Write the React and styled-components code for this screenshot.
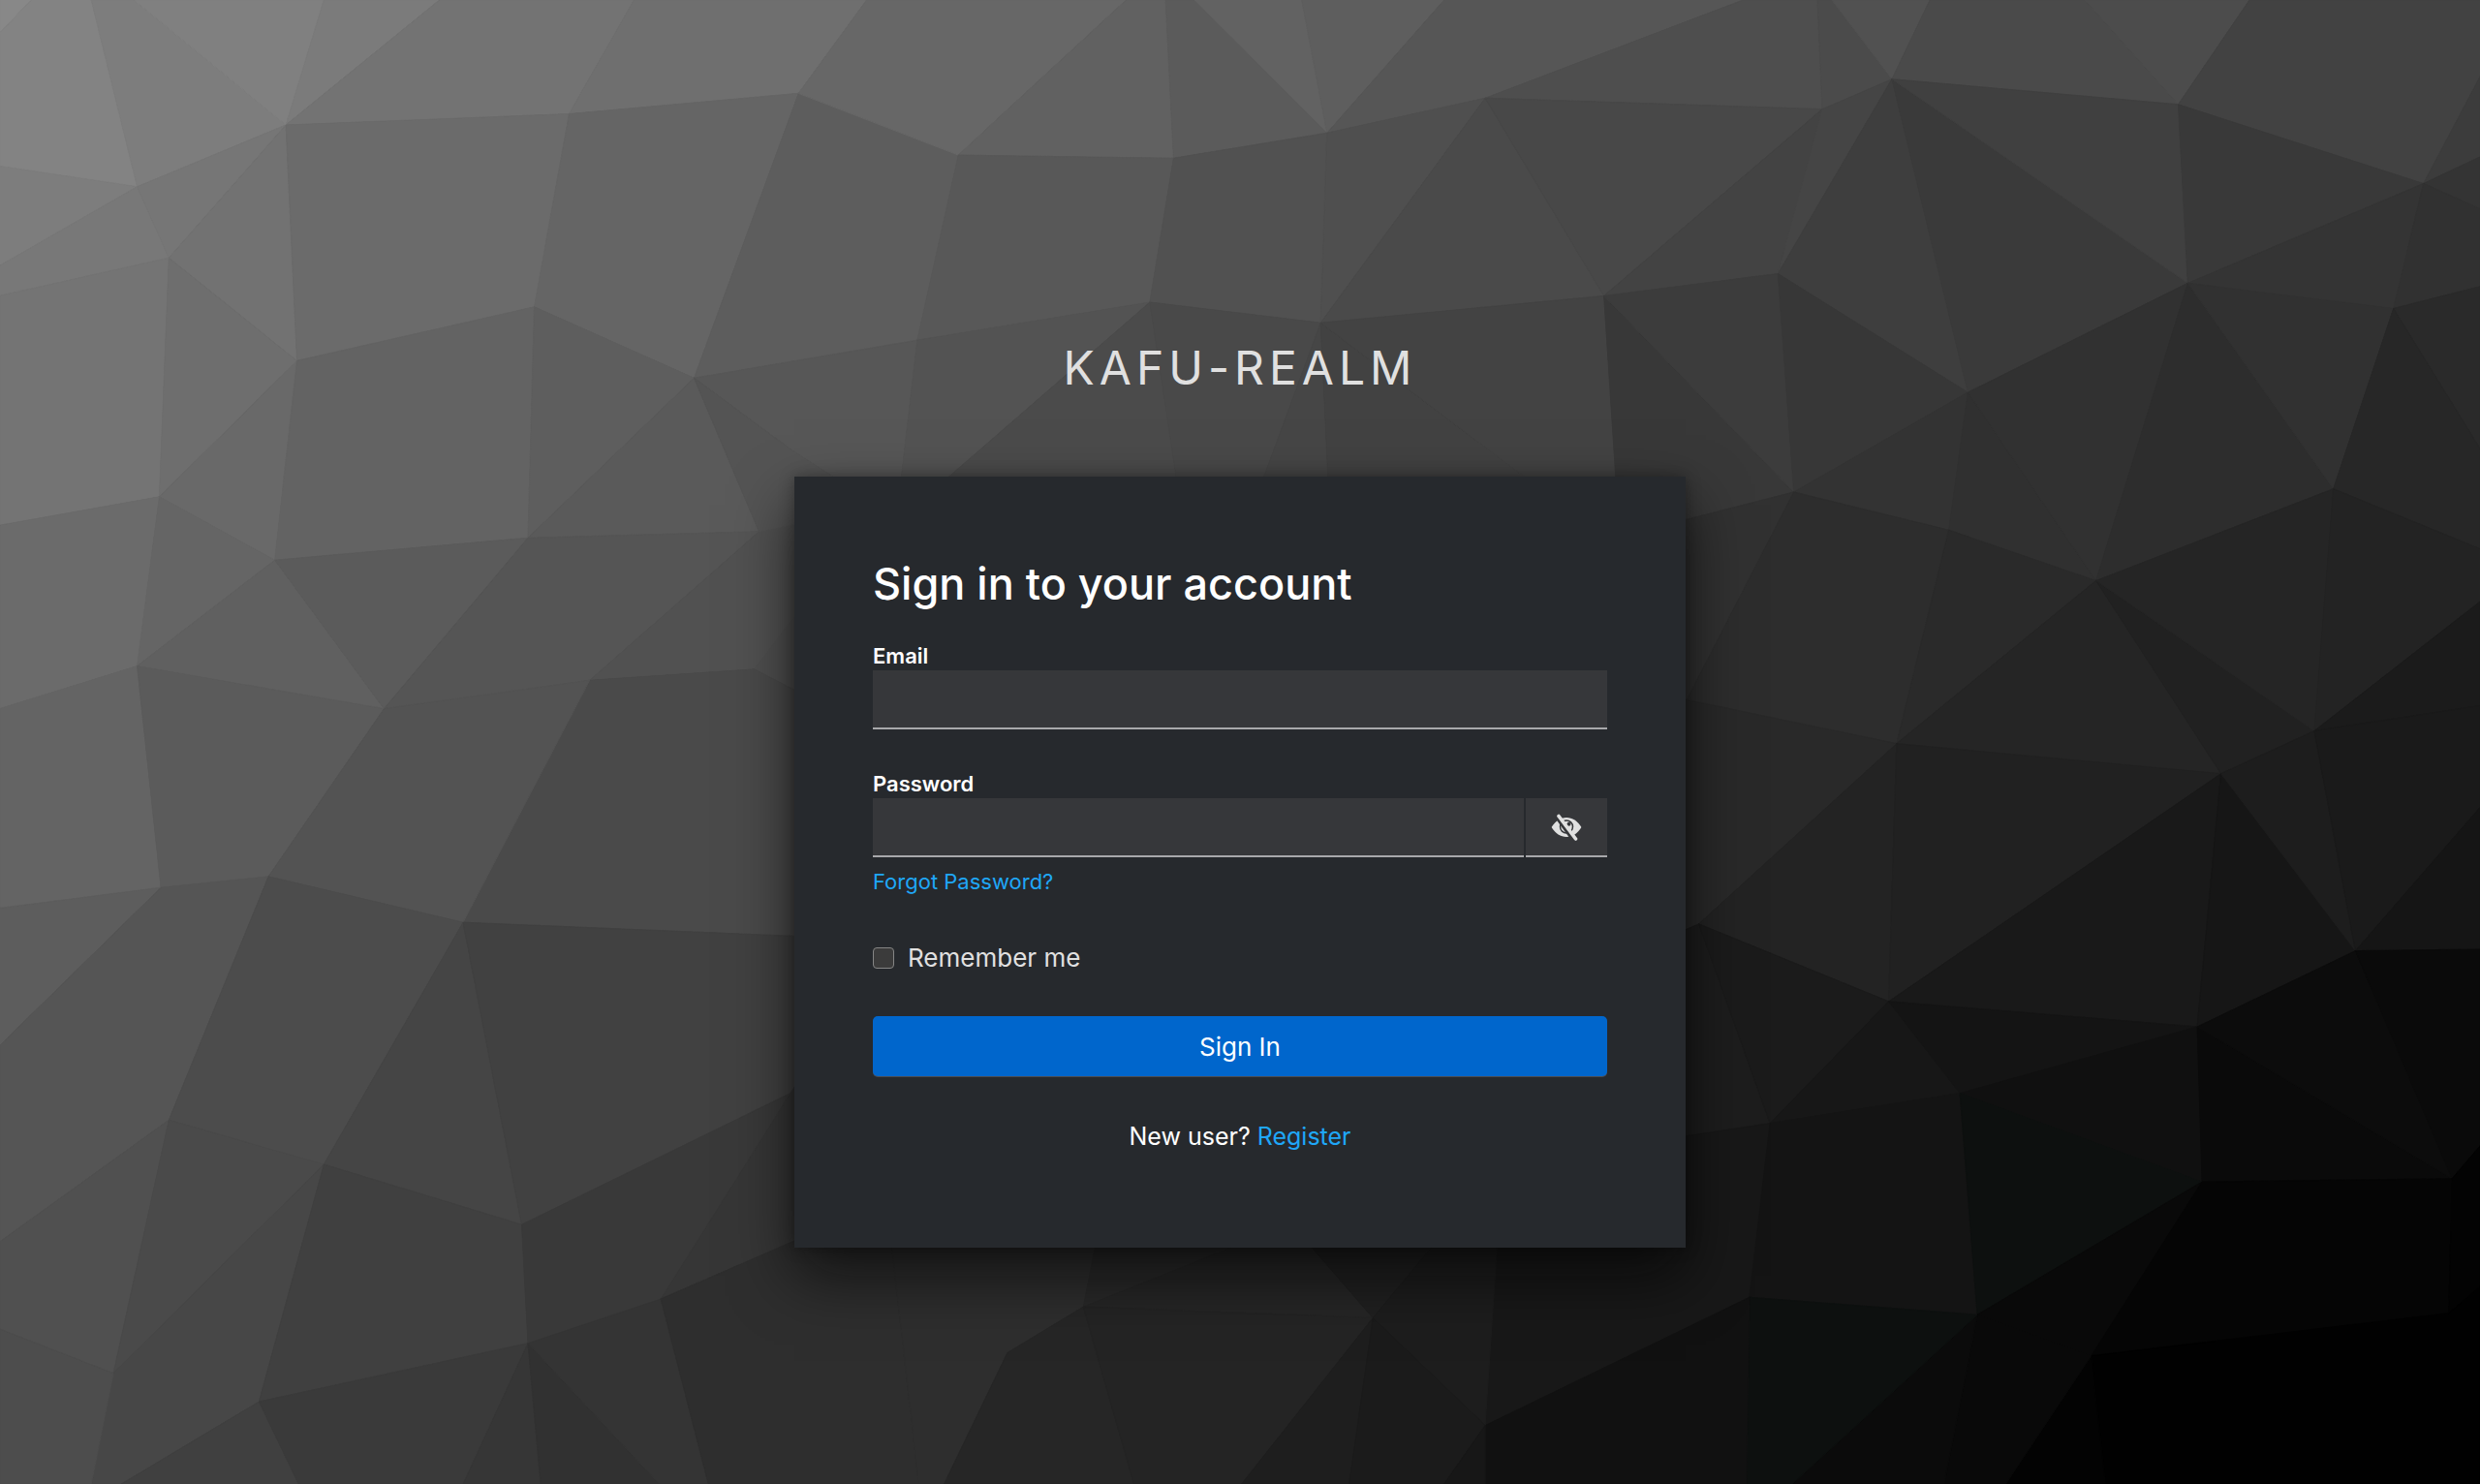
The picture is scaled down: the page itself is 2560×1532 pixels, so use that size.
import React, { useState } from "react";
import styled, { createGlobalStyle } from "styled-components";

const GlobalStyle = createGlobalStyle`
  *, *::before, *::after { box-sizing: border-box; }
  body {
    margin: 0;
    background: #1b1b1b;
    color: #e0e0e0;
    font-family: Inter, "Liberation Sans", sans-serif;
  }
`;

/* Low-poly backdrop: [grey level or colour, polygon points] */
const FACETS = [
  ["#888888", "0,0 20,0 0,21"],
  ["#838383", "20,0 58,0 87,118 0,105 0,21"],
  ["#7d7d7d", "58,0 85,0 181,79 87,118"],
  ["#808080", "85,0 205,0 181,79"],
  ["#7b7b7b", "205,0 278,0 181,79"],
  ["#737373", "278,0 401,0 360,72 181,79"],
  ["#6f6f6f", "401,0 548,0 505,59 360,72"],
  ["#7d7d7d", "0,105 87,118 0,168"],
  ["#787878", "0,168 87,118 107,163 0,187"],
  ["#767676", "87,118 181,79 107,163"],
  ["#727272", "181,79 188,228 107,163"],
  ["#6b6b6b", "181,79 360,72 338,194 188,228"],
  ["#656565", "360,72 505,59 439,239 338,194"],
  ["#5d5d5d", "505,59 606,98 580,215 439,239"],
  ["#747474", "0,187 107,163 101,314 0,332"],
  ["#6e6e6e", "107,163 188,228 101,314"],
  ["#696969", "188,228 174,354 101,314"],
  ["#636363", "188,228 338,194 334,340 174,354"],
  ["#5e5e5e", "338,194 439,239 334,340"],
  ["#5a5a5a", "439,239 480,336 334,340"],
  ["#6b6b6b", "0,332 101,314 87,421 0,448"],
  ["#656565", "101,314 174,354 87,421"],
  ["#606060", "174,354 243,448 87,421"],
  ["#5b5b5b", "174,354 334,340 243,448"],
  ["#555555", "334,340 480,336 373,430 243,448"],
  ["#515151", "480,336 510,330 510,400 477,423 373,430"],
  ["#4f4f4f", "477,423 510,380 510,440"],
  ["#4a4a4a", "373,430 477,423 510,440 510,592 293,583"],
  ["#646464", "0,448 87,421 102,561 0,574"],
  ["#5b5b5b", "87,421 243,448 170,554 102,561"],
  ["#535353", "243,448 373,430 293,583 170,554"],
  ["#5d5d5d", "0,574 102,561 0,661"],
  ["#555555", "0,661 102,561 170,554 107,708 0,785"],
  ["#4c4c4c", "170,554 293,583 205,736 107,708"],
  ["#454545", "293,583 330,774 205,736"],
  ["#414141", "293,583 510,592 510,686 330,774"],
  ["#505050", "0,785 107,708 72,868 0,840"],
  ["#4a4a4a", "107,708 205,736 72,868"],
  ["#474747", "205,736 164,886 77,938 58,938 72,868"],
  ["#404040", "205,736 330,774 334,849 164,886"],
  ["#393939", "330,774 510,686 418,821 334,849"],
  ["#363636", "510,675 510,781 418,821"],
  ["#4d4d4d", "0,840 72,868 58,938 0,938"],
  ["#404040", "164,886 189,938 77,938"],
  ["#3a3a3a", "164,886 334,849 293,938 189,938"],
  ["#363636", "334,849 342,938 293,938"],
  ["#313131", "334,849 417,938 342,938"],
  ["#343434", "334,849 418,821 448,938 417,938"],
  ["#2e2e2e", "418,821 510,781 563,780 581,938 448,938"],
  ["#676767", "548,0 712,0 606,98 505,59"],
  ["#616161", "712,0 737,0 742,100 606,98"],
  ["#5b5b5b", "737,0 755,0 839,84 742,100"],
  ["#626262", "755,0 823,0 839,84"],
  ["#5e5e5e", "823,0 913,0 839,84"],
  ["#565656", "913,0 1102,0 939,62 839,84"],
  ["#4e4e4e", "1102,0 1149,0 1152,69 939,62"],
  ["#4b4b4b", "1149,0 1158,0 1196,50 1152,69"],
  ["#515151", "1158,0 1220,0 1196,50"],
  ["#4a4a4a", "1220,0 1318,0 1377,66 1196,50"],
  ["#4c4c4c", "1318,0 1422,0 1377,66"],
  ["#424242", "1422,0 1568,0 1568,48 1532,116 1377,66"],
  ["#3c3c3c", "1568,48 1568,99 1532,116"],
  ["#585858", "606,98 742,100 727,191 580,215"],
  ["#515151", "742,100 839,84 835,204 727,191"],
  ["#4f4f4f", "839,84 939,62 835,204"],
  ["#4a4a4a", "939,62 1014,187 835,204"],
  ["#484848", "939,62 1152,69 1014,187"],
  ["#434343", "1152,69 1124,173 1014,187"],
  ["#454545", "1152,69 1196,50 1124,173"],
  ["#3e3e3e", "1196,50 1244,248 1124,173"],
  ["#3a3a3a", "1196,50 1383,179 1244,248"],
  ["#404040", "1196,50 1377,66 1383,179"],
  ["#393939", "1377,66 1532,116 1383,179"],
  ["#343434", "1532,116 1513,195 1383,179"],
  ["#343434", "1532,116 1568,99 1568,132"],
  ["#313131", "1532,116 1568,132 1568,181 1513,195"],
  ["#575757", "439,239 580,215 569,310 540,310 500,284"],
  ["#545454", "439,239 500,284 540,310 510,330 480,336"],
  ["#535353", "580,215 727,191 590,310 569,310"],
  ["#4b4b4b", "727,191 745,310 590,310"],
  ["#494949", "727,191 835,204 796,310 745,310"],
  ["#464646", "835,204 840,310 796,310"],
  ["#424242", "835,204 975,310 840,310"],
  ["#434343", "835,204 1014,187 1022,310 975,310"],
  ["#383838", "1014,187 1134,311 1060,330 1022,310"],
  ["#3c3c3c", "1014,187 1124,173 1134,311"],
  ["#373737", "1124,173 1244,248 1134,311"],
  ["#333333", "1244,248 1232,335 1134,311"],
  ["#303030", "1244,248 1325,367 1232,335"],
  ["#313131", "1244,248 1383,179 1325,367"],
  ["#2d2d2d", "1383,179 1475,309 1325,367"],
  ["#313131", "1383,179 1513,195 1475,309"],
  ["#2a2a2a", "1513,195 1568,181 1568,284"],
  ["#272727", "1513,195 1568,284 1568,347 1475,309"],
  ["#313131", "1134,311 1066,453 1060,453 1060,330"],
  ["#2d2d2d", "1134,311 1232,335 1199,470 1066,443"],
  ["#2a2a2a", "1232,335 1325,367 1199,470"],
  ["#252525", "1325,367 1404,489 1199,470"],
  ["#212121", "1325,367 1463,462 1404,489"],
  ["#252525", "1325,367 1475,309 1463,462"],
  ["#232323", "1475,309 1568,347 1568,380 1463,462"],
  ["#1b1b1b", "1463,462 1568,380 1568,446"],
  ["#292929", "1060,441 1199,470 1074,584 1060,590"],
  ["#232323", "1199,470 1194,633 1074,584"],
  ["#212121", "1199,470 1404,489 1194,633"],
  ["#191919", "1404,489 1389,649 1194,633"],
  ["#161616", "1404,489 1489,601 1389,649"],
  ["#1d1d1d", "1463,462 1489,601 1404,489"],
  ["#1a1a1a", "1463,462 1568,446 1568,510 1489,601"],
  ["#151515", "1568,510 1568,600 1489,601"],
  ["#1d1d1d", "1060,590 1074,584 1119,710 1060,719"],
  ["#1b1b1b", "1074,584 1194,633 1119,710"],
  ["#171717", "1194,633 1239,691 1119,710"],
  ["#141414", "1194,633 1389,649 1239,691"],
  ["#101010", "1389,649 1392,747 1239,691"],
  ["#0a0a0a", "1389,649 1550,745 1392,747"],
  ["#0c0c0c", "1389,649 1489,601 1550,745"],
  ["#0a0a0a", "1489,601 1568,600 1568,724 1550,745"],
  ["#181818", "1060,719 1119,710 1106,820 939,901 947,780 1060,780"],
  ["#141414", "1119,710 1239,691 1250,831 1106,820"],
  ["#0d100f", "1239,691 1392,747 1250,831"],
  ["#090909", "1392,747 1322,857 1250,831"],
  ["#050505", "1392,747 1550,745 1548,830 1322,857"],
  ["#030303", "1550,745 1568,724 1568,813 1548,830"],
  ["#010101", "1548,830 1568,813 1568,938 1331,938 1322,857"],
  ["#030303", "1322,857 1331,938 1268,938"],
  ["#090909", "1250,831 1322,857 1268,938 1229,938"],
  ["#0b0b0b", "1250,831 1229,938 1133,938"],
  ["#0d100f", "1106,820 1250,831 1133,938 1104,938"],
  ["#111111", "1106,820 1104,938 939,938 939,901"],
  ["#2e2e2e", "563,780 696,780 685,826 637,855 597,938 581,938"],
  ["#292929", "694,780 800,780 685,826"],
  ["#262626", "800,780 822,780 868,833 685,826"],
  ["#202020", "822,780 912,780 868,833"],
  ["#1d1d1d", "912,780 947,780 939,901 868,833"],
  ["#262626", "637,855 685,826 717,938 597,938"],
  ["#242424", "685,826 868,833 785,938 717,938"],
  ["#1e1e1e", "868,833 853,938 785,938"],
  ["#1b1b1b", "868,833 939,901 913,938 853,938"],
  ["#171717", "939,901 939,938 913,938"],
];

const Page = styled.div`
  display: grid;
  min-height: 100vh;
`;

const Backdrop = styled.svg`
  grid-area: 1 / 1;
  display: block;
  width: 100%;
  height: 100%;
  min-height: 100vh;
`;

const Login = styled.div`
  grid-area: 1 / 1;
  display: flex;
  flex-direction: column;
  align-items: center;
  padding: 350px 24px 80px;
`;

const RealmName = styled.header`
  margin-bottom: 82px;
  font-size: 48px;
  line-height: 60px;
  letter-spacing: 5px;
  text-transform: uppercase;
  color: #e0e0e0;
`;

const Card = styled.main`
  width: 100%;
  max-width: 920px;
  padding: 80px 81px 94px;
  background: #26292d;
  box-shadow: 0 29px 59px rgba(3, 3, 3, 0.64), 0 0 15px rgba(3, 3, 3, 0.32);
`;

const Title = styled.h1`
  margin: 0 0 28px;
  font-size: 45px;
  font-weight: 500;
  line-height: 62px;
  color: #ffffff;
`;

const Field = styled.div`
  display: flex;
  flex-direction: column;
  margin-bottom: ${(p) => p.$gap}px;
`;

const Label = styled.label`
  font-size: 22px;
  font-weight: 600;
  line-height: 30px;
  color: #ffffff;
`;

const InputGroup = styled.div`
  display: flex;
  gap: 2px;
`;

const TextInput = styled.input`
  flex: 1 1 auto;
  min-width: 0;
  height: 61px;
  min-height: 61px;
  padding: 0 16px;
  border: 0;
  border-bottom: 2px solid #a8a8ab;
  border-radius: 0;
  background: #36373a;
  color: #ffffff;
  font: inherit;
  font-size: 26px;
  outline: none;
`;

const ToggleButton = styled.button`
  display: flex;
  align-items: center;
  justify-content: center;
  width: 84px;
  height: 61px;
  padding: 0;
  border: 0;
  border-bottom: 2px solid #a8a8ab;
  background: #36373a;
  cursor: pointer;
`;

const Link = styled.a`
  color: #1fa7f8;
  text-decoration: none;
`;

const Helper = styled.div`
  margin-top: 10px;
  font-size: 22px;
  line-height: 30px;
`;

const Remember = styled.label`
  display: flex;
  align-items: center;
  gap: 14px;
  margin-bottom: 39px;
  font-size: 26px;
  line-height: 42px;
  color: #e0e0e0;
`;

const Checkbox = styled.input`
  appearance: none;
  width: 22px;
  height: 22px;
  margin: 0;
  border: 1px solid #858585;
  border-radius: 4px;
  background: #3b3b3b;

  &:checked { background: #0066cc; }
`;

const SubmitButton = styled.button`
  display: block;
  width: 100%;
  height: 62px;
  padding: 0;
  border: 0;
  border-radius: 5px;
  background: #0066cc;
  box-shadow: 0 1px 0 #4b4c50;
  color: #ffffff;
  font: inherit;
  font-size: 26px;
  cursor: pointer;
`;

const Registration = styled.div`
  margin-top: 41px;
  font-size: 25px;
  line-height: 42px;
  text-align: center;
  color: #ffffff;
`;

function LowPoly() {
  return (
    <Backdrop viewBox="0 0 1568 938" preserveAspectRatio="xMidYMid slice" aria-hidden="true">
      {FACETS.map(([color, points]) => (
        <polygon key={points} points={points} fill={color} stroke={color} strokeWidth="0.6" />
      ))}
    </Backdrop>
  );
}

function EyeSlash() {
  return (
    <svg width="32" height="28" viewBox="0 0 32 28" aria-hidden="true">
      <path
        fill="#e0e0e0"
        d="M.6 14C4.5 7.500 10 4 16 4s11.600 3.500 15.400 10C27.600 20.500 22 24 16 24S4.500 20.500.6 14z"
      />
      <circle cx="16" cy="13.500" r="6.500" fill="none" stroke="#36373a" strokeWidth="1.500" />
      <circle cx="18.500" cy="10.800" r="2" fill="#36373a" />
      <path d="M5.500 3.500 22.500 27" stroke="#36373a" strokeWidth="3" />
      <path d="M8 2.500 25.500 26" stroke="#e0e0e0" strokeWidth="3.600" strokeLinecap="round" />
    </svg>
  );
}

export default function App() {
  const [visible, setVisible] = useState(false);

  return (
    <>
      <GlobalStyle />
      <Page>
        <LowPoly />
        <Login>
          <RealmName>kafu-realm</RealmName>
          <Card>
            <Title>Sign in to your account</Title>
            <form onSubmit={(e) => e.preventDefault()}>
              <Field $gap={41}>
                <Label htmlFor="username">Email</Label>
                <TextInput id="username" name="username" type="text" />
              </Field>
              <Field $gap={43}>
                <Label htmlFor="password">Password</Label>
                <InputGroup>
                  <TextInput id="password" name="password" type={visible ? "text" : "password"} />
                  <ToggleButton
                    type="button"
                    aria-label="Show password"
                    onClick={() => setVisible(!visible)}
                  >
                    <EyeSlash />
                  </ToggleButton>
                </InputGroup>
                <Helper>
                  <Link href="#reset">Forgot Password?</Link>
                </Helper>
              </Field>
              <Remember htmlFor="rememberMe">
                <Checkbox id="rememberMe" name="rememberMe" type="checkbox" />
                Remember me
              </Remember>
              <SubmitButton type="submit">Sign In</SubmitButton>
            </form>
            <Registration>
              New user? <Link href="#register">Register</Link>
            </Registration>
          </Card>
        </Login>
      </Page>
    </>
  );
}
